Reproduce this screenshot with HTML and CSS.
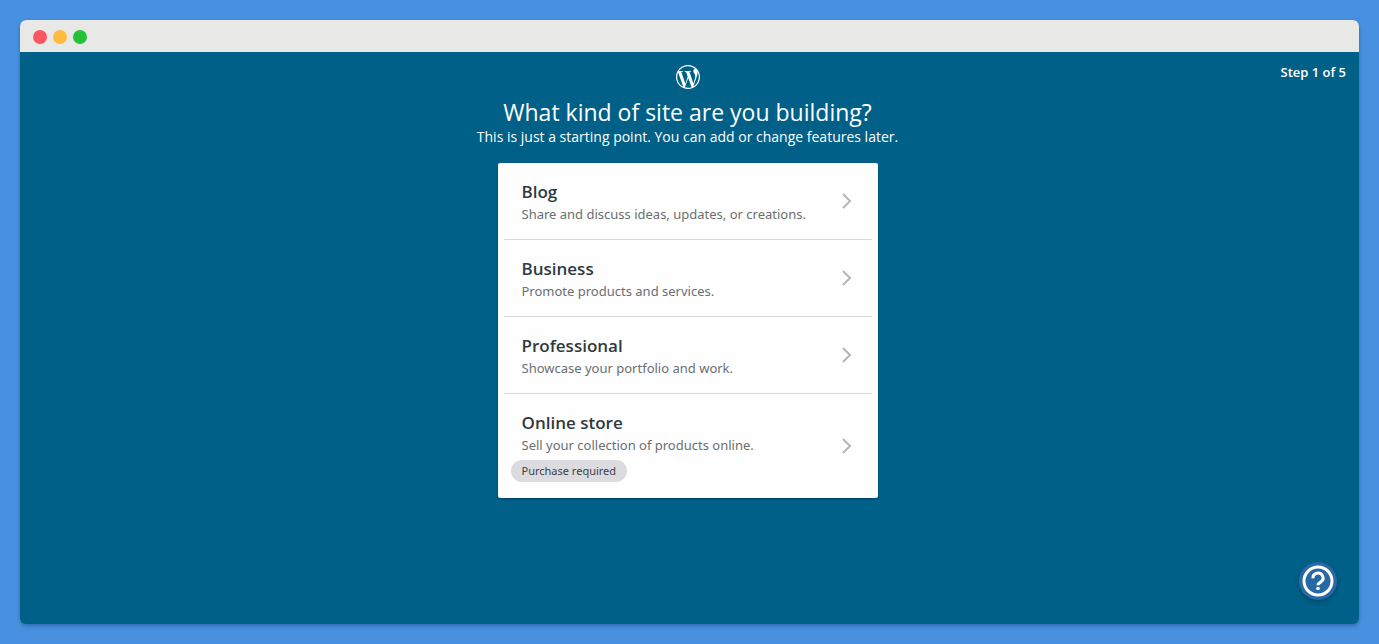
FILE: index.html
```html
<!DOCTYPE html>
<html lang="en">
<head>
<meta charset="utf-8">
<meta name="viewport" content="width=device-width, initial-scale=1">
<title>What kind of site are you building?</title>
<link rel="stylesheet" href="styles.css">
</head>
<body>
<div class="window">
  <div class="titlebar">
    <span class="dot dot-red"></span>
    <span class="dot dot-yellow"></span>
    <span class="dot dot-green"></span>
  </div>
  <main class="signup">
    <svg class="logo" viewBox="2 2 20 20" aria-hidden="true">
      <path fill="currentColor" fill-rule="evenodd" d="M12 22C6.486 22 2 17.514 2 12S6.486 2 12 2s10 4.486 10 10-4.486 10-10 10zM12.158 12.786L9.46 20.625c.806.237 1.657.366 2.54.366 1.047 0 2.051-.181 2.986-.51-.024-.038-.046-.079-.065-.124l-2.763-7.571zM3.009 12c0 3.559 2.068 6.634 5.067 8.092L3.788 8.341C3.289 9.459 3.009 10.696 3.009 12zm15.06-.454c0-1.112-.399-1.881-.741-2.48-.456-.741-.883-1.368-.883-2.109 0-.826.627-1.596 1.51-1.596.04 0 .078.005.116.007C16.472 3.904 14.34 3.009 12 3.009c-3.141 0-5.904 1.612-7.512 4.052.211.007.41.011.579.011.94 0 2.396-.114 2.396-.114.484-.028.541.684.057.741 0 0-.487.057-1.029.085l3.274 9.739 1.968-5.901-1.401-3.838c-.484-.028-.943-.085-.943-.085-.485-.029-.428-.769.057-.741 0 0 1.484.114 2.368.114.94 0 2.397-.114 2.397-.114.485-.028.542.684.057.741 0 0-.488.057-1.029.085l3.249 9.665.897-2.996c.456-1.169.684-2.137.684-2.907zm1.82-3.86c.039.286.06.593.06.924 0 .912-.171 1.938-.684 3.22l-2.746 7.94c2.673-1.558 4.47-4.454 4.47-7.771 0-1.563-.399-3.033-1.1-4.313z"/>
    </svg>
    <p class="step">Step 1 of 5</p>
    <h1 class="title">What kind of site are you building?</h1>
    <p class="subtitle">This is just a starting point. You can add or change features later.</p>
    <div class="card">
      <button class="option" type="button">
        <span class="option-text">
          <span class="option-name">Blog</span>
          <span class="option-desc">Share and discuss ideas, updates, or creations.</span>
        </span>
        <svg class="chevron" viewBox="0 0 12 18" aria-hidden="true"><path d="M2 2l7 7-7 7"/></svg>
      </button>
      <button class="option" type="button">
        <span class="option-text">
          <span class="option-name">Business</span>
          <span class="option-desc">Promote products and services.</span>
        </span>
        <svg class="chevron" viewBox="0 0 12 18" aria-hidden="true"><path d="M2 2l7 7-7 7"/></svg>
      </button>
      <button class="option" type="button">
        <span class="option-text">
          <span class="option-name">Professional</span>
          <span class="option-desc">Showcase your portfolio and work.</span>
        </span>
        <svg class="chevron" viewBox="0 0 12 18" aria-hidden="true"><path d="M2 2l7 7-7 7"/></svg>
      </button>
      <button class="option" type="button">
        <span class="option-text">
          <span class="option-name">Online store</span>
          <span class="option-desc">Sell your collection of products online.</span>
          <span class="badge">Purchase required</span>
        </span>
        <svg class="chevron" viewBox="0 0 12 18" aria-hidden="true"><path d="M2 2l7 7-7 7"/></svg>
      </button>
    </div>
    <button class="help" type="button" aria-label="Help">
      <svg viewBox="0 0 38 38" aria-hidden="true">
        <circle cx="19" cy="19" r="14" fill="none" stroke="currentColor" stroke-width="3"/>
        <path d="M14 16.300a5 4.800 0 1 1 7.800 3.600Q19 21.600 19 23.300" fill="none" stroke="currentColor" stroke-width="3"/>
        <circle cx="19" cy="26.500" r="1.800" fill="currentColor"/>
      </svg>
    </button>
  </main>
</div>
</body>
</html>
```
FILE: styles.css
```css
* {
  box-sizing: border-box;
}

body {
  margin: 0;
  min-height: 100vh;
  padding: 20px;
  display: flex;
  background: #4891e1;
  font-family: "Open Sans", "Noto Sans", sans-serif;
}

.window {
  flex: 1;
  display: flex;
  flex-direction: column;
  border-radius: 6px;
  overflow: hidden;
  background: #016087;
  box-shadow: 0 2px 4px rgba(0, 40, 90, 0.35);
}

.titlebar {
  display: flex;
  align-items: center;
  gap: 6px;
  height: 32px;
  padding: 2px 13px 0;
  background: #e8e8e7;
}

.dot {
  width: 14px;
  height: 14px;
  border-radius: 50%;
}

.dot-red {
  background: #fc5661;
}

.dot-yellow {
  background: #fdbb3f;
}

.dot-green {
  background: #24c138;
}

.signup {
  position: relative;
  flex: 1;
  display: flex;
  flex-direction: column;
  align-items: center;
  padding: 13px 16px 24px 12px;
  color: #fff;
}

.logo {
  width: 24px;
  height: 24px;
}

.step {
  position: absolute;
  top: 10px;
  right: 13px;
  margin: 0;
  font-size: 13px;
  line-height: 20px;
  font-weight: 600;
}

.title {
  margin: 8px 0 1px;
  font-size: 23px;
  line-height: 30px;
  font-weight: 400;
}

.subtitle {
  margin: 0;
  font-size: 14px;
  line-height: 18px;
}

.card {
  width: 100%;
  max-width: 380px;
  margin-top: 17px;
  padding: 0 6px;
  border-radius: 2px;
  background: #fefefe;
  box-shadow: 0 1px 2px rgba(0, 30, 60, 0.5);
}

.option {
  display: flex;
  align-items: center;
  justify-content: space-between;
  width: 100%;
  padding: 16px 18px;
  border: 0;
  border-bottom: 1px solid #d8d8da;
  background: none;
  font-family: inherit;
  text-align: left;
  cursor: pointer;
}

.option:last-child {
  border-bottom: 0;
}

.option-text {
  display: flex;
  flex-direction: column;
  align-items: flex-start;
}

.option-name {
  color: #2f3a41;
  font-size: 17px;
  line-height: 26px;
  font-weight: 600;
}

.option-desc {
  color: #6b6e72;
  font-family: "Noto Sans", sans-serif;
  font-size: 13px;
  line-height: 18px;
}

.badge {
  margin: 6px 0 0 -11px;
  padding: 0 11px;
  border-radius: 11px;
  background: #dcdce0;
  color: #3c4146;
  font-family: "Noto Sans", sans-serif;
  font-size: 11px;
  line-height: 22px;
}

.chevron {
  width: 12px;
  height: 18px;
  margin-right: 1px;
  fill: none;
  stroke: #b4b6b8;
  stroke-width: 2;
}

.help {
  position: absolute;
  right: 22px;
  bottom: 24px;
  width: 38px;
  height: 38px;
  padding: 0;
  border: 0;
  border-radius: 50%;
  background: #2769a4;
  color: #fff;
  box-shadow: 0 2px 4px rgba(0, 30, 60, 0.35);
  cursor: pointer;
}

.help svg {
  display: block;
  width: 100%;
  height: 100%;
}
```
